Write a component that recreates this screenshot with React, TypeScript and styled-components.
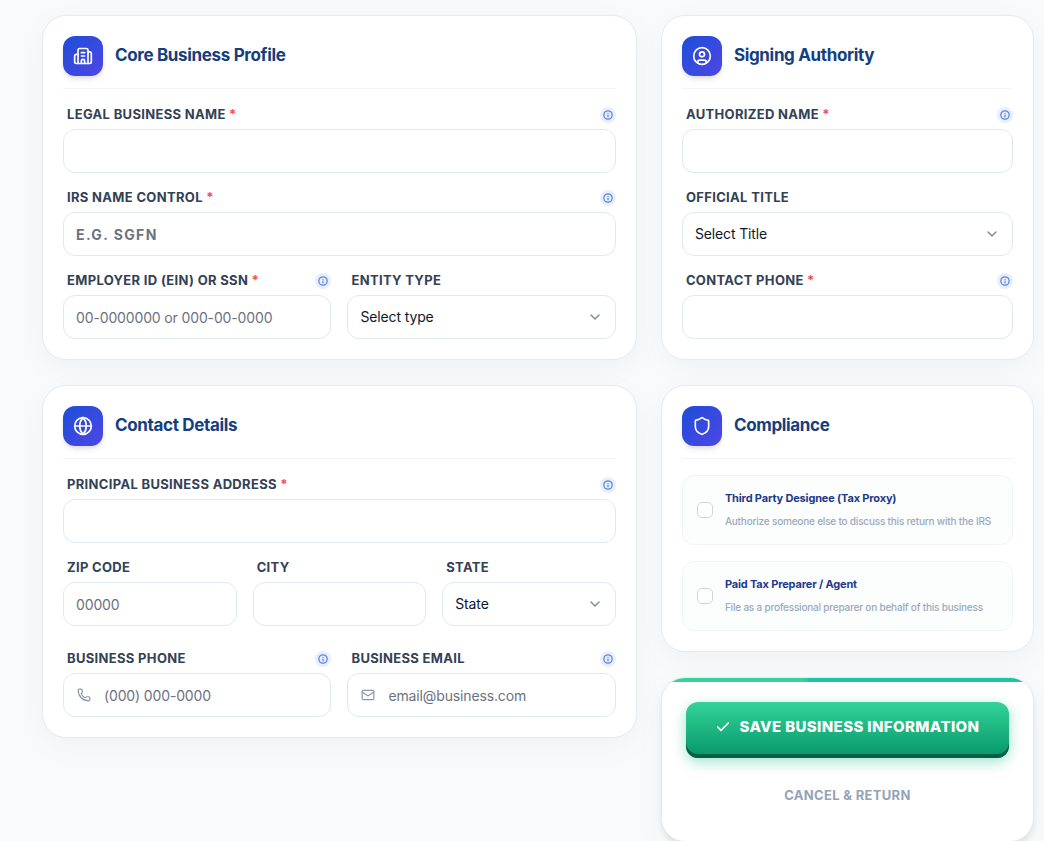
import React from "react";
import styled, { createGlobalStyle, css } from "styled-components";
import {
  Building2,
  Check,
  ChevronDown,
  CircleUser,
  Globe,
  Info,
  Mail,
  Phone,
  Shield,
} from "lucide-react";

const GlobalStyle = createGlobalStyle`
  *, *::before, *::after { box-sizing: border-box; }
  body {
    margin: 0;
    background: #f8fafc;
    font-family: Inter, "Liberation Sans", sans-serif;
    color: #0f172a;
  }
  button, input, select { font: inherit; color: inherit; }
`;

const Page = styled.form`
  display: grid;
  grid-template-columns: 59fr 37fr;
  align-items: start;
  gap: 24px;
  padding: 15px 10px 16px 42px;
`;

const Column = styled.div`
  display: flex;
  flex-direction: column;
  gap: 25px;
  min-width: 0;
`;

const Card = styled.section`
  padding: 20px;
  background: #ffffff;
  border: 1px solid #e6eaf1;
  border-radius: 24px;
  box-shadow: 0 8px 30px rgba(0, 0, 0, 0.04);
`;

const CardHeader = styled.header`
  display: flex;
  align-items: center;
  gap: 12px;
  padding-bottom: 12px;
  margin-bottom: 16px;
  border-bottom: 1px solid #f1f5f9;
`;

const IconTile = styled.span`
  display: grid;
  place-items: center;
  width: 40px;
  height: 40px;
  flex: none;
  border-radius: 12px;
  color: #ffffff;
  background: linear-gradient(135deg, #1d4ed8, #4f46e5);
  box-shadow: 0 4px 6px -1px rgba(0, 0, 0, 0.1), 0 2px 4px -2px rgba(0, 0, 0, 0.1);
`;

const CardTitle = styled.h2`
  margin: 0;
  padding-bottom: 2px;
  font-size: 17px;
  line-height: 26px;
  font-weight: 700;
  letter-spacing: -0.02em;
  color: #153e7e;
`;

const Fields = styled.div`
  display: flex;
  flex-direction: column;
  gap: 15px;
`;

const FieldRow = styled.div<{ $columns: number; $spaced?: boolean }>`
  display: grid;
  grid-template-columns: repeat(${(p) => p.$columns}, minmax(0, 1fr));
  gap: 16px;
  padding-top: ${(p) => (p.$spaced ? 8 : 0)}px;
`;

const FieldBox = styled.div`
  display: flex;
  flex-direction: column;
  gap: 5px;
`;

const LabelLine = styled.div`
  display: flex;
  align-items: center;
  justify-content: space-between;
  height: 19px;
  padding-left: 4px;
`;

const Label = styled.label`
  font-size: 13px;
  line-height: 19px;
  font-weight: 700;
  letter-spacing: 0.025em;
  text-transform: uppercase;
  white-space: nowrap;
  color: #334155;
`;

const Required = styled.span`
  color: #f05252;
`;

const InfoButton = styled.button`
  display: grid;
  place-items: center;
  width: 16px;
  height: 16px;
  padding: 0;
  border: 0;
  border-radius: 50%;
  color: #5585e4;
  background: #e8eefb;
`;

const Control = styled.div`
  position: relative;
  display: flex;
  align-items: center;
`;

const controlStyles = css`
  width: 100%;
  height: 44px;
  padding: 0 12px;
  border: 1px solid #e2e8f0;
  border-radius: 12px;
  background: #ffffff;
  font-size: 14px;
  line-height: 20px;
  letter-spacing: -0.01em;
  outline: none;
`;

const Input = styled.input<{ $icon?: boolean; $code?: boolean }>`
  ${controlStyles}
  ${(p) => p.$icon && css`padding-left: 40px;`}
  ${(p) =>
    p.$code &&
    css`
      font-weight: 700;
      letter-spacing: 0.1em;
      text-transform: uppercase;
    `}
  &::placeholder {
    color: #6b7280;
    opacity: 1;
  }
`;

const Select = styled.select`
  ${controlStyles}
  appearance: none;
`;

const LeadIcon = styled.span`
  position: absolute;
  left: 14px;
  display: flex;
  color: #8797b0;
`;

const Arrow = styled.span`
  position: absolute;
  right: 13px;
  display: flex;
  color: #7c8797;
  pointer-events: none;
`;

const Options = styled.div`
  display: flex;
  flex-direction: column;
  gap: 16px;
`;

const Option = styled.label`
  display: flex;
  align-items: center;
  gap: 12px;
  min-height: 70px;
  padding: 0 14px;
  border: 1px solid #f1f5f9;
  border-radius: 12px;
  background: #fcfdfd;
`;

const Checkbox = styled.input`
  appearance: none;
  flex: none;
  width: 16px;
  height: 16px;
  margin: 0;
  border: 1px solid #cbd5e1;
  border-radius: 5px;
  background: #ffffff;
`;

const OptionText = styled.span`
  display: flex;
  flex-direction: column;
  gap: 7px;
  padding-bottom: 2px;
`;

const OptionTitle = styled.span`
  font-size: 11px;
  line-height: 16px;
  font-weight: 700;
  letter-spacing: -0.015em;
  color: #1e3a8a;
`;

const OptionNote = styled.span`
  font-size: 10px;
  line-height: 16px;
  font-weight: 500;
  letter-spacing: -0.02em;
  color: #9aa9be;
`;

const ActionCard = styled.section`
  display: flex;
  flex-direction: column;
  overflow: hidden;
  border: 1px solid #e6eaf1;
  border-radius: 24px;
  background: #ffffff;
  box-shadow: 0 4px 6px -1px rgba(0, 0, 0, 0.1), 0 8px 30px rgba(0, 0, 0, 0.04);
`;

const Accent = styled.div`
  height: 4px;
  background: linear-gradient(90deg, #34d399 38%, #1fc2a2 40%);
`;

const Actions = styled.div`
  display: flex;
  flex-direction: column;
  gap: 13px;
  padding: 20px 24px 22px;
`;

const SaveButton = styled.button`
  display: flex;
  align-items: center;
  justify-content: center;
  gap: 8px;
  height: 56px;
  padding: 0 12px 7px;
  border: 0;
  border-radius: 12px;
  color: #ffffff;
  font-size: 15px;
  font-weight: 800;
  letter-spacing: 0.025em;
  white-space: nowrap;
  background: linear-gradient(180deg, #34d399, #059669);
  box-shadow: inset 0 -4px 0 #065f46, 0 4px 14px rgba(16, 185, 129, 0.4);
`;

const CancelButton = styled.button`
  height: 48px;
  padding: 0;
  border: 0;
  background: transparent;
  font-size: 13px;
  font-weight: 700;
  letter-spacing: 0.025em;
  color: #94a3b8;
`;

type FieldProps = {
  id: string;
  label: string;
  required?: boolean;
  info?: boolean;
  placeholder?: string;
  option?: string;
  icon?: React.ReactNode;
  code?: boolean;
};

function Field({ id, label, required, info, placeholder, option, icon, code }: FieldProps) {
  return (
    <FieldBox>
      <LabelLine>
        <Label htmlFor={id}>
          {label}
          {required && <Required> *</Required>}
        </Label>
        {info && (
          <InfoButton type="button" aria-label={`About ${label}`}>
            <Info size={10} strokeWidth={3} />
          </InfoButton>
        )}
      </LabelLine>
      <Control>
        {icon && <LeadIcon>{icon}</LeadIcon>}
        {option ? (
          <>
            <Select id={id}>
              <option>{option}</option>
            </Select>
            <Arrow>
              <ChevronDown size={16} />
            </Arrow>
          </>
        ) : (
          <Input id={id} placeholder={placeholder} $icon={!!icon} $code={code} />
        )}
      </Control>
    </FieldBox>
  );
}

function Heading({ icon, children }: { icon: React.ReactNode; children: React.ReactNode }) {
  return (
    <CardHeader>
      <IconTile>{icon}</IconTile>
      <CardTitle>{children}</CardTitle>
    </CardHeader>
  );
}

function ComplianceOption({ title, note }: { title: string; note: string }) {
  return (
    <Option>
      <Checkbox type="checkbox" />
      <OptionText>
        <OptionTitle>{title}</OptionTitle>
        <OptionNote>{note}</OptionNote>
      </OptionText>
    </Option>
  );
}

export default function App() {
  return (
    <>
      <GlobalStyle />
      <Page onSubmit={(e) => e.preventDefault()}>
        <Column>
          <Card>
            <Heading icon={<Building2 size={20} />}>Core Business Profile</Heading>
            <Fields>
              <Field id="legal-name" label="Legal Business Name" required info />
              <Field id="name-control" label="IRS Name Control" required info placeholder="E.G. SGFN" code />
              <FieldRow $columns={2}>
                <Field id="ein" label="Employer ID (EIN) or SSN" required info placeholder="00-0000000 or 000-00-0000" />
                <Field id="entity" label="Entity Type" option="Select type" />
              </FieldRow>
            </Fields>
          </Card>
          <Card>
            <Heading icon={<Globe size={20} />}>Contact Details</Heading>
            <Fields>
              <Field id="address" label="Principal Business Address" required info />
              <FieldRow $columns={3}>
                <Field id="zip" label="ZIP Code" placeholder="00000" />
                <Field id="city" label="City" />
                <Field id="state" label="State" option="State" />
              </FieldRow>
              <FieldRow $columns={2} $spaced>
                <Field id="phone" label="Business Phone" info placeholder="(000) 000-0000" icon={<Phone size={14} />} />
                <Field id="email" label="Business Email" info placeholder="email@business.com" icon={<Mail size={14} />} />
              </FieldRow>
            </Fields>
          </Card>
        </Column>
        <Column>
          <Card>
            <Heading icon={<CircleUser size={20} />}>Signing Authority</Heading>
            <Fields>
              <Field id="signer" label="Authorized Name" required info />
              <Field id="title" label="Official Title" option="Select Title" />
              <Field id="contact-phone" label="Contact Phone" required info />
            </Fields>
          </Card>
          <Card>
            <Heading icon={<Shield size={20} />}>Compliance</Heading>
            <Options>
              <ComplianceOption
                title="Third Party Designee (Tax Proxy)"
                note="Authorize someone else to discuss this return with the IRS"
              />
              <ComplianceOption
                title="Paid Tax Preparer / Agent"
                note="File as a professional preparer on behalf of this business"
              />
            </Options>
          </Card>
          <ActionCard>
            <Accent />
            <Actions>
              <SaveButton type="submit">
                <Check size={16} strokeWidth={2.5} />
                SAVE BUSINESS INFORMATION
              </SaveButton>
              <CancelButton type="button">CANCEL &amp; RETURN</CancelButton>
            </Actions>
          </ActionCard>
        </Column>
      </Page>
    </>
  );
}
